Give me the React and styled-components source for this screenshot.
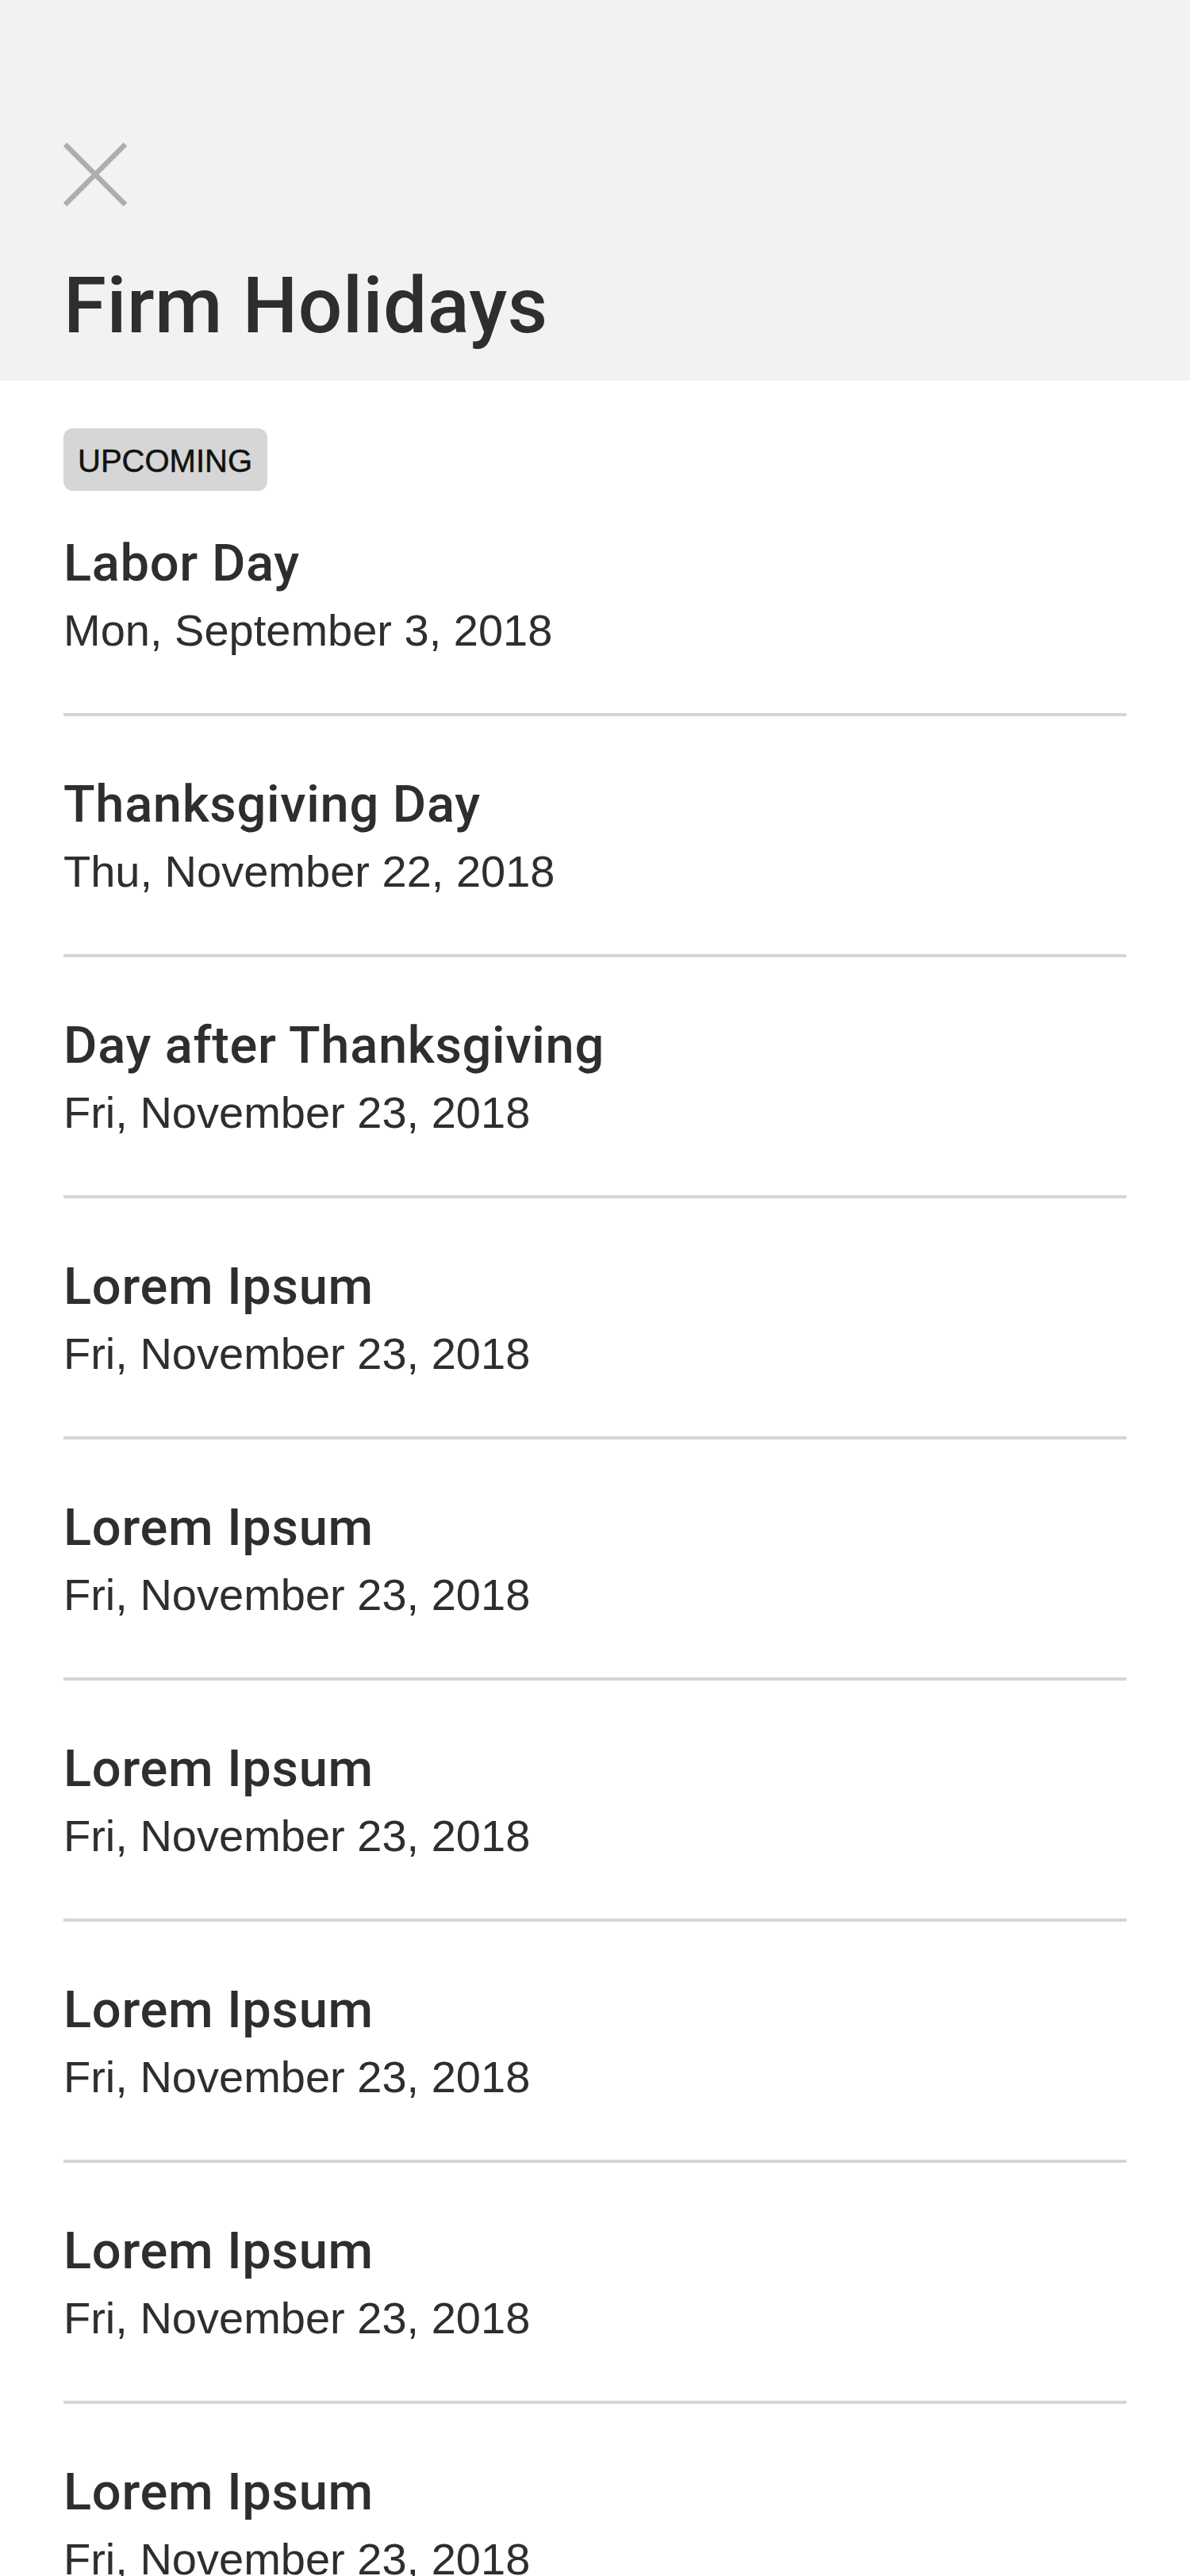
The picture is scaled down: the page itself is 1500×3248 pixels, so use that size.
import React from 'react'
import styled, { createGlobalStyle } from 'styled-components'

const GlobalStyle = createGlobalStyle`
  html, body {
    margin: 0;
    padding: 0;
    background: #ffffff;
  }
  body {
    font-family: "Liberation Sans", Arial, Helvetica, sans-serif;
    color: #2e2e2e;
  }
`

const Page = styled.div`
  display: flex;
  flex-direction: column;
`

const Header = styled.header`
  background: #f2f2f2;
  padding: 180px 80px 39px;
  display: flex;
  flex-direction: column;
  align-items: flex-start;
`

const CloseButton = styled.button`
  width: 80px;
  height: 80px;
  padding: 0;
  border: 0;
  background: transparent;
  cursor: pointer;
  display: block;
  margin-bottom: 71px;
`

const Title = styled.h1`
  margin: 0;
  font-family: Roboto, "Liberation Sans", Arial, sans-serif;
  font-size: 98px;
  line-height: 110px;
  letter-spacing: 0.5px;
  font-weight: 500;
  color: #2e2e2e;
`

const List = styled.section`
  padding: 60px 80px 0;
  display: flex;
  flex-direction: column;
`

const Badge = styled.span`
  align-self: flex-start;
  background: #d6d6d6;
  color: #111111;
  border-radius: 12px;
  height: 79px;
  box-sizing: border-box;
  padding: 3px 19px 0 18px;
  font-size: 40px;
  line-height: 76px;
  -webkit-text-stroke: 0.5px #111111;
  margin-bottom: -20px;
`

const Row = styled.div`
  padding: 74px 0 71px;
  border-bottom: 4px solid #d5d5d5;
  display: flex;
  flex-direction: column;
`

const Name = styled.div`
  font-family: Roboto, "Liberation Sans", Arial, sans-serif;
  font-size: 65px;
  line-height: 74px;
  letter-spacing: 0.7px;
  font-weight: 500;
`

const DateText = styled.div`
  margin-top: 15px;
  font-size: 56px;
  line-height: 66px;
`

const holidays = [
  { name: 'Labor Day', date: 'Mon, September 3, 2018' },
  { name: 'Thanksgiving Day', date: 'Thu, November 22, 2018' },
  { name: 'Day after Thanksgiving', date: 'Fri, November 23, 2018' },
  { name: 'Lorem Ipsum', date: 'Fri, November 23, 2018' },
  { name: 'Lorem Ipsum', date: 'Fri, November 23, 2018' },
  { name: 'Lorem Ipsum', date: 'Fri, November 23, 2018' },
  { name: 'Lorem Ipsum', date: 'Fri, November 23, 2018' },
  { name: 'Lorem Ipsum', date: 'Fri, November 23, 2018' },
  { name: 'Lorem Ipsum', date: 'Fri, November 23, 2018' },
]

export default function App() {
  return (
    <Page>
      <GlobalStyle />
      <Header>
        <CloseButton aria-label="Close">
          <svg width="80" height="80" viewBox="0 0 80 80" fill="none">
            <path d="M2 2 L78 78 M78 2 L2 78" stroke="#aeaeae" strokeWidth="6.5" />
          </svg>
        </CloseButton>
        <Title>Firm Holidays</Title>
      </Header>
      <List>
        <Badge>UPCOMING</Badge>
        {holidays.map((h, i) => (
          <Row key={i}>
            <Name>{h.name}</Name>
            <DateText>{h.date}</DateText>
          </Row>
        ))}
      </List>
    </Page>
  )
}
